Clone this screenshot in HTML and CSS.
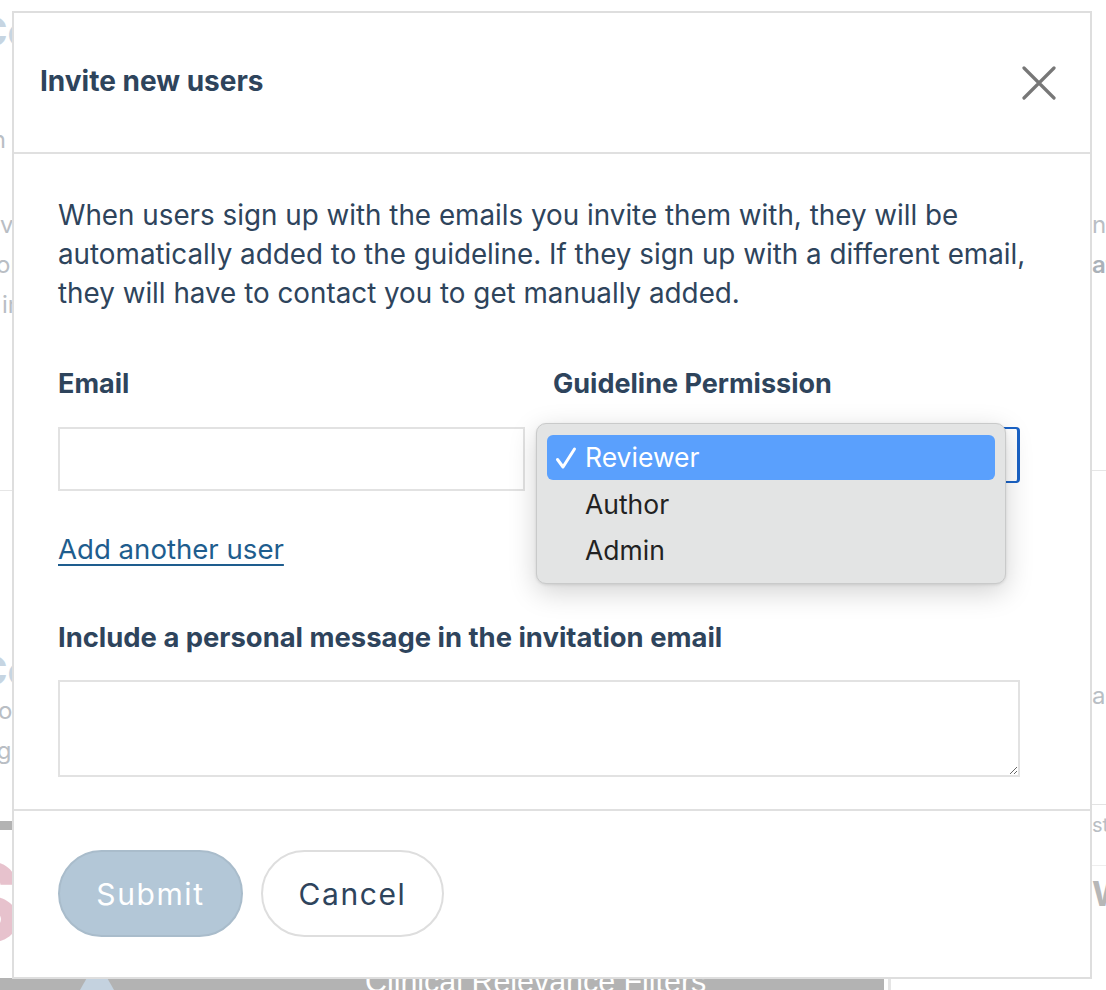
FILE: index.html
```html
<!DOCTYPE html>
<html lang="en">
<head>
<meta charset="utf-8">
<title>Invite new users</title>
<link rel="stylesheet" href="styles.css">
</head>
<body>
<div class="backdrop">
  <div class="bg-col bg-left">
    <div class="bg-h">Co</div>
    <div class="bg-t t1">in</div>
    <div class="bg-t t2">ov</div>
    <div class="bg-t t3">or</div>
    <div class="bg-t t4">ir</div>
    <div class="bg-rule r1"></div>
    <div class="bg-h h2">Co</div>
    <div class="bg-t t5">or</div>
    <div class="bg-t t6">rg</div>
    <div class="bg-bar"></div>
    <div class="bg-pink">S</div>
  </div>
  <div class="bg-col bg-right">
    <div class="bg-t rt1">ne</div>
    <div class="bg-t rt2 b">at</div>
    <div class="bg-rule r2"></div>
    <div class="bg-t rt3">a</div>
    <div class="bg-rule r3"></div>
    <div class="bg-t rt4">st</div>
    <div class="bg-rule r4"></div>
    <div class="bg-t rt5">W</div>
  </div>
  <div class="bg-bottom">
    <div class="bg-strip">
      <span class="bg-tri"></span>
      <span class="bg-strip-text">Clinical Relevance Filters</span>
    </div>
    <div class="bg-strip-rest"></div>
  </div>
</div>

<div class="modal" role="dialog" aria-labelledby="modal-title">
  <header class="modal-header">
    <h2 id="modal-title" class="modal-title">Invite new users</h2>
    <button class="close-btn" aria-label="Close">
      <svg width="34" height="34" viewBox="0 0 34 34"><path d="M2 2 L32 32 M32 2 L2 32" stroke="#777" stroke-width="3.2" stroke-linecap="round" fill="none"/></svg>
    </button>
  </header>
  <div class="modal-body">
    <p class="intro">When users sign up with the emails you invite them with, they will be automatically added to the guideline. If they sign up with a different email, they will have to contact you to get manually added.</p>
    <div class="fields">
      <div class="field">
        <label class="label" for="email">Email</label>
        <input id="email" class="text-input" type="text">
      </div>
      <div class="field">
        <label class="label" for="perm">Guideline Permission</label>
        <div class="select-wrap">
          <div class="select-box" id="perm"></div>
          <ul class="menu">
            <li class="menu-item active"><svg class="check" width="22" height="24" viewBox="0 0 22 24"><path d="M2.5 13.5 L8 21 L19.5 3" stroke="#fff" stroke-width="3" stroke-linecap="round" stroke-linejoin="round" fill="none"/></svg>Reviewer</li>
            <li class="menu-item">Author</li>
            <li class="menu-item">Admin</li>
          </ul>
        </div>
      </div>
    </div>
    <a class="add-link" href="#">Add another user</a>
    <label class="label msg-label" for="msg">Include a personal message in the invitation email</label>
    <textarea id="msg" class="textarea"></textarea>
  </div>
  <footer class="modal-footer">
    <button class="btn btn-primary">Submit</button>
    <button class="btn btn-secondary">Cancel</button>
  </footer>
</div>
</body>
</html>
```

FILE: styles.css
```css
* { box-sizing: border-box; }
html, body { margin: 0; padding: 0; }
body {
  width: 1106px;
  height: 990px;
  overflow: hidden;
  position: relative;
  background: #fff;
  font-family: "Inter", "Liberation Sans", sans-serif;
  color: #2e445c;
}

/* ---------- background page (faded) ---------- */
.backdrop {
  display: flex;
  width: 1106px;
  height: 990px;
  position: relative;
  color: #b9bec4;
}
.bg-col {
  display: flex;
  flex-direction: column;
  overflow: hidden;
}
.bg-left { width: 12px; }
.bg-right { width: 14px; margin-left: auto; }
.bg-h {
  font-size: 40px;
  font-weight: 700;
  color: #c6d5e2;
  line-height: 40px;
  margin-top: 12px;
  margin-left: -22px;
}
.bg-t {
  font-size: 24px;
  line-height: 40px;
  white-space: nowrap;
}
.bg-left .bg-t { margin-left: -14px; }
.t1 { margin-top: 68px; }
.t2 { margin-top: 45px; }
.t3 { margin-left: -4px !important; }
.t4 { margin-left: 2px !important; }
.r1 { margin-top: 165px; height: 1px; background: #e6e6e6; width: 100%; flex: none; }
.h2 { margin-top: 160px; margin-left: -22px; }
.t5 { margin-left: -2px !important; }
.t6 { margin-left: -12px !important; }
.bg-bar { margin-top: 50px; height: 9px; background: #b3b3b3; width: 100%; flex: none; }
.bg-pink {
  font-size: 110px;
  line-height: 100px;
  font-weight: 700;
  color: #e7c2cd;
  margin-left: -50px;
  margin-top: 22px;
}
.bg-right .bg-t { margin-left: 0; }
.rt1 { margin-top: 205px; }
.rt2 { font-weight: 600; color: #aab1b8; }
.r2 { margin-top: 185px; height: 1px; background: #e6e6e6; width: 100%; flex: none; }
.rt3 { margin-top: 205px; }
.r3 { margin-top: 88px; height: 1px; background: #e3e3e3; width: 100%; flex: none; }
.rt4 { font-size: 20px; }
.r4 { margin-top: 20px; height: 1px; background: #eee; width: 100%; flex: none; }
.rt5 { margin-top: 8px; font-size: 34px; font-weight: 700; color: #b7b7b7; }

.bg-bottom {
  position: absolute;
  left: 0;
  right: 0;
  bottom: 0;
  height: 12px;
  display: flex;
}
.bg-strip {
  width: 884px;
  background: #b3b3b3;
  position: relative;
  overflow: hidden;
  display: flex;
  padding-left: 365px;
}
.bg-tri {
  position: absolute;
  left: 80px;
  top: 0;
  width: 34px;
  height: 12px;
  background: #c4d2df;
  clip-path: polygon(20% 0, 80% 0, 100% 100%, 0 100%);
}
.bg-strip-text {
  color: #fff;
  font-family: "Liberation Sans", sans-serif;
  font-size: 32px;
  line-height: 12px;
  margin-top: -3px;
  transform: scaleX(0.95);
  transform-origin: left center;
  white-space: nowrap;
}
.bg-strip-rest {
  flex: 1;
  border-left: 3px solid #e5e5e5;
  margin-left: 4px;
}

/* ---------- modal ---------- */
.modal {
  position: absolute;
  left: 12px;
  top: 11px;
  width: 1080px;
  height: 968px;
  background: #fff;
  border: 2px solid #dedede;
  display: flex;
  flex-direction: column;
}
.modal-header {
  height: 141px;
  flex: none;
  display: flex;
  align-items: center;
  justify-content: space-between;
  padding: 0 34px 0 26px;
  border-bottom: 2px solid #e0e0e0;
}
.modal-title {
  margin: 0;
  font-size: 28px;
  font-weight: 700;
  color: #2e445c;
  line-height: 34px;
  margin-bottom: 4px;
}
.close-btn {
  border: 0;
  background: none;
  padding: 0;
  width: 34px;
  height: 34px;
  display: flex;
  margin-top: 1px;
}

.modal-body {
  flex: 1;
  padding: 42px 40px 0 44px;
}
.intro {
  margin: 0;
  font-size: 27.8px;
  line-height: 39px;
  color: #2e445c;
}
.fields {
  display: grid;
  grid-template-columns: 467px 467px;
  column-gap: 28px;
  margin-top: 56px;
}
.field { display: flex; flex-direction: column; }
.label {
  display: block;
  font-size: 27px;
  font-weight: 700;
  line-height: 30px;
  color: #2e445c;
}
.text-input {
  margin-top: 28px;
  height: 64px;
  border: 2px solid #e2e2e2;
  border-radius: 0;
  background: #fff;
  font: inherit;
}
.select-wrap {
  position: relative;
  margin-top: 28px;
  height: 56px;
}
.select-box {
  height: 56px;
  border: 2px solid #e2e2e2;
  border-right: 3px solid #1b63c6;
  border-top-color: #1b63c6;
  border-bottom-color: #1b63c6;
  border-radius: 4px;
  background: #fff;
}
.menu {
  position: absolute;
  left: -17px;
  top: -4px;
  width: 470px;
  margin: 0;
  padding: 11px 10px 10px;
  list-style: none;
  background: #e3e4e4;
  border: 1px solid #c9caca;
  border-radius: 10px;
  box-shadow: 0 8px 28px rgba(0,0,0,0.18), 0 1px 3px rgba(0,0,0,0.1);
  font-family: "Inter", "Noto Sans", sans-serif;
}
.menu-item {
  height: 46px;
  line-height: 46px;
  padding-left: 38px;
  font-size: 26.5px;
  color: #222;
  position: relative;
  border-radius: 6px;
}
.menu-item.active {
  height: 45px;
  line-height: 45px;
  background: #5aa0fd;
  color: #fff;
  margin-bottom: 1px;
}
.check {
  position: absolute;
  left: 8px;
  top: 11px;
}

.add-link {
  display: inline-block;
  margin-top: 43px;
  font-size: 27.6px;
  line-height: 30px;
  color: #1e5d8e;
  text-decoration: underline;
  text-underline-offset: 5px;
  text-decoration-thickness: 2px;
}
.msg-label { margin-top: 58px; font-size: 27.4px; }
.textarea {
  display: block;
  margin-top: 28px;
  width: 962px;
  height: 97px;
  border: 2px solid #e2e2e2;
  border-radius: 0;
  resize: vertical;
  font: inherit;
}

.modal-footer {
  flex: none;
  height: 168px;
  border-top: 2px solid #e0e0e0;
  padding: 39px 0 0 44px;
  display: flex;
  align-items: flex-start;
  gap: 18px;
}
.btn {
  height: 87px;
  border-radius: 44px;
  font-family: "Inter", sans-serif;
  font-size: 30px;
  letter-spacing: 1.6px;
  cursor: pointer;
}
.btn-primary {
  width: 185px;
  background: #b3c7d7;
  border: 2px solid #a9bccb;
  color: #fff;
}
.btn-secondary {
  width: 183px;
  background: #fff;
  border: 2px solid #dedede;
  color: #2e445c;
}
```
